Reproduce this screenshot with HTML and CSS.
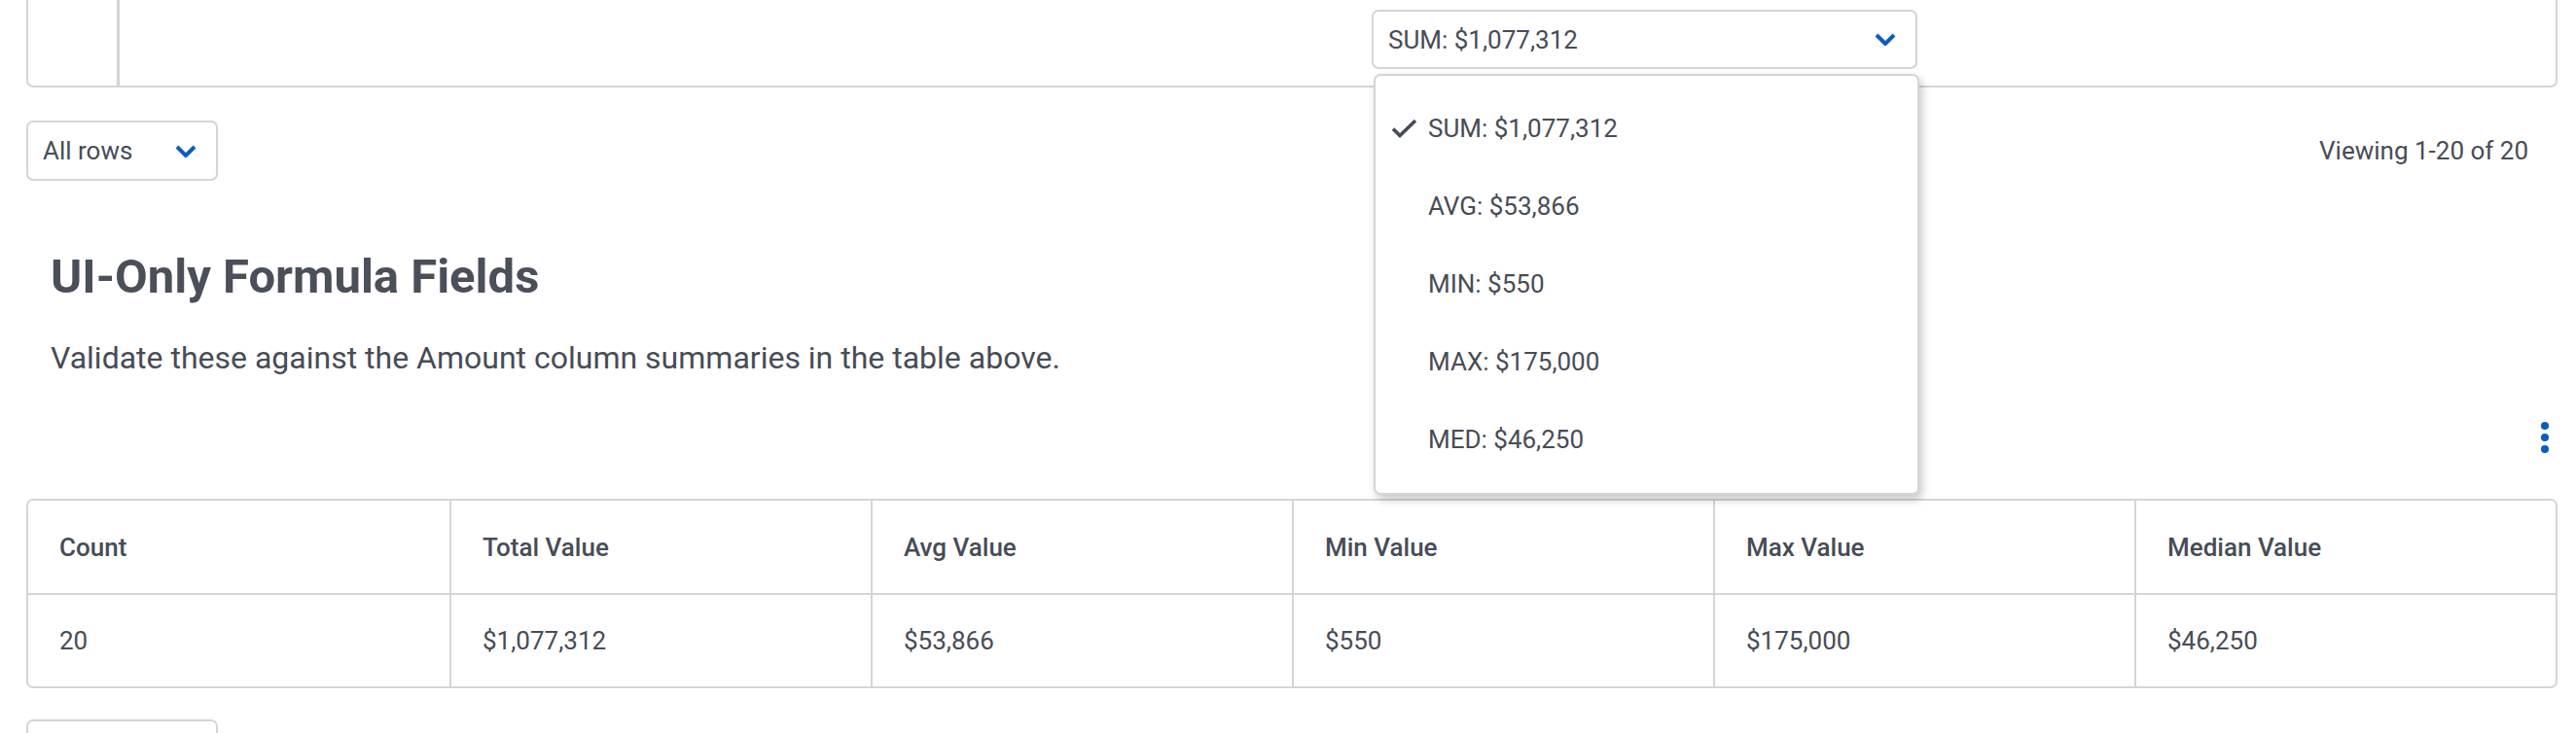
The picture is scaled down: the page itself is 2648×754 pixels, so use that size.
FILE: index.html
```html
<!DOCTYPE html>
<html lang="en">
<head>
<meta charset="utf-8">
<title>UI-Only Formula Fields</title>
<link rel="stylesheet" href="styles.css">
</head>
<body>
<div class="page">
  <div class="grid-card">
    <div class="row-head"></div>
    <div class="footer-cells">
      <div class="summary-cell">
        <div class="select-wrap">
          <div class="select select-wide">
            <span>SUM: $1,077,312</span>
            <svg class="chev" viewBox="0 0 22 13" width="22" height="13"><path d="M2 2 L11 11 L20 2" fill="none" stroke="currentColor" stroke-width="4"/></svg>
          </div>
          <ul class="menu">
            <li class="menu-item selected">
              <svg class="check" viewBox="0 0 27 20" width="27" height="20"><path d="M2 10.5 L9 17.5 L25 2" fill="none" stroke="currentColor" stroke-width="3.6"/></svg>
              <span>SUM: $1,077,312</span>
            </li>
            <li class="menu-item"><span>AVG: $53,866</span></li>
            <li class="menu-item"><span>MIN: $550</span></li>
            <li class="menu-item"><span>MAX: $175,000</span></li>
            <li class="menu-item"><span>MED: $46,250</span></li>
          </ul>
        </div>
      </div>
    </div>
  </div>

  <div class="toolbar">
    <div class="select">
      <span>All rows</span>
      <svg class="chev" viewBox="0 0 22 13" width="22" height="13"><path d="M2 2 L11 11 L20 2" fill="none" stroke="currentColor" stroke-width="4"/></svg>
    </div>
    <div class="viewing">Viewing 1-20 of 20</div>
  </div>

  <section class="section">
    <h2 class="title">UI-Only Formula Fields</h2>
    <p class="desc">Validate these against the Amount column summaries in the table above.</p>
  </section>

  <div class="actions">
    <button class="kebab" aria-label="More actions"><span></span><span></span><span></span></button>
  </div>

  <table class="formula-table">
    <thead>
      <tr><th>Count</th><th>Total Value</th><th>Avg Value</th><th>Min Value</th><th>Max Value</th><th>Median Value</th></tr>
    </thead>
    <tbody>
      <tr><td>20</td><td>$1,077,312</td><td>$53,866</td><td>$550</td><td>$175,000</td><td>$46,250</td></tr>
    </tbody>
  </table>

  <div class="toolbar next">
    <div class="select"><span>All rows</span>
      <svg class="chev" viewBox="0 0 22 13" width="22" height="13"><path d="M2 2 L11 11 L20 2" fill="none" stroke="currentColor" stroke-width="4"/></svg>
    </div>
  </div>
</div>
</body>
</html>
```

FILE: styles.css
```css
* { box-sizing: border-box; }
html, body { margin: 0; padding: 0; background: #fff; }
body {
  font-family: Roboto, "Liberation Sans", sans-serif;
  font-size: 26px;
  color: #474c57;
  overflow: hidden;
}
.page { padding: 0 19px 0 27px; }

.grid-card {
  display: flex;
  height: 90px;
  border: 2px solid #d5d5d5;
  border-top: none;
  border-radius: 0 0 7px 7px;
}
.row-head {
  width: 94px;
  flex: none;
  border-right: 3px solid #d5d5d5;
}
.footer-cells { flex: 1; display: flex; }
.summary-cell { padding: 10px 0 0 1287px; }
.select-wrap { position: relative; }

.select {
  display: inline-flex;
  align-items: center;
  height: 62px;
  padding: 0 20px 0 15px;
  border: 2px solid #d5d5d5;
  border-radius: 7px;
  background: #fff;
  gap: 44px;
  color: #474c57;
}
.select-wide {
  width: 561px;
  height: 61px;
  justify-content: space-between;
}
.chev { color: #0b5cbf; display: block; }

.menu {
  position: absolute;
  top: 66px;
  left: 2px;
  width: 561px;
  margin: 0;
  padding: 14px 0 15px;
  list-style: none;
  background: #fff;
  border: 2px solid #d5d5d5;
  border-radius: 7px;
  box-shadow: 3px 5px 10px rgba(0, 0, 0, 0.22);
  z-index: 5;
}
.menu-item {
  display: flex;
  align-items: center;
  height: 80px;
  padding-left: 54px;
}
.menu-item.selected { padding-left: 16px; gap: 11px; }
.check { color: #474c57; display: block; }

.toolbar {
  display: flex;
  align-items: center;
  justify-content: space-between;
  margin-top: 34px;
}
.viewing { padding-right: 30px; }

.section { padding-left: 25px; }
.title {
  margin: 69px 0 0;
  font-size: 49px;
  line-height: 60px;
  font-weight: 700;
  color: #4a4f5a;
}
.desc {
  margin: 33px 0 0;
  font-size: 32px;
  line-height: 40px;
}

.actions {
  display: flex;
  justify-content: flex-end;
  margin-top: 38px;
  height: 48px;
  align-items: center;
  padding-right: 9px;
}
.kebab {
  display: flex;
  flex-direction: column;
  gap: 4px;
  padding: 0;
  border: none;
  background: none;
}
.kebab span {
  width: 8px;
  height: 8px;
  border-radius: 50%;
  background: #0b5cbf;
}

.formula-table {
  margin-top: 39px;
  width: 100%;
  table-layout: fixed;
  border-collapse: separate;
  border-spacing: 0;
  border: 2px solid #d5d5d5;
  border-radius: 7px;
}
.formula-table th,
.formula-table td {
  text-align: left;
  padding: 0 32px;
  border-left: 2px solid #d5d5d5;
}
.formula-table th:first-child,
.formula-table td:first-child { border-left: none; }
.formula-table th {
  height: 97px;
  font-weight: 500;
  border-bottom: 2px solid #d5d5d5;
}
.formula-table td { height: 94px; font-weight: 400; }

.toolbar.next { margin-top: 32px; }
```
